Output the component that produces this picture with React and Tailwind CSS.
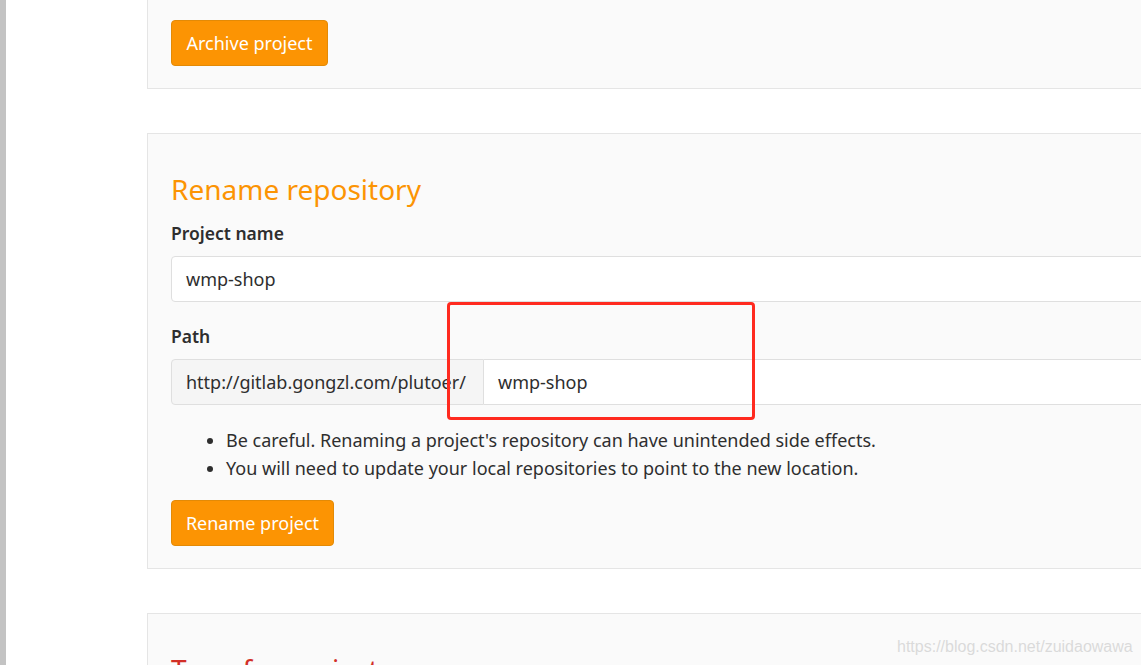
import React from 'react';

const font = { fontFamily: '"Noto Sans", "Open Sans", sans-serif' };

const OrangeButton = ({ children, width }) => (
    <button className={`h-[46px] ${width} rounded-[4px] border border-[#e38a06] bg-[#fc9403] text-[18px] text-white`}>
        {children}
    </button>
);

const App = () => {
    return (
        <div className="relative flex h-[665px] w-[1141px] overflow-hidden bg-white text-[#2e2e2e]" style={font}>
            {/* left scrollbar edge */}
            <div className="w-[6px] shrink-0 bg-[#c3c3c3]" />

            <div className="ml-[141px] flex w-[1100px] shrink-0 flex-col">
                {/* Archive panel (top cut off) */}
                <section className="border border-t-0 border-[#e5e5e5] bg-[#fafafa] pl-[23px] pt-[20px] pb-[22px]">
                    <OrangeButton width="w-[157px]">Archive project</OrangeButton>
                </section>

                {/* Rename repository */}
                <section className="mt-[44px] border border-[#e5e5e5] bg-[#fafafa] pl-[23px] pt-[38px] pb-[22px]">
                    <h2 className="text-[28px] leading-[34px] text-[#fc9403]">Rename repository</h2>

                    <label className="mt-[15px] block text-[17.5px] font-semibold leading-[24px]">Project name</label>
                    <div className="mt-[11px] flex h-[46px] items-center rounded-l-[4px] border border-[#dfdfdf] bg-white pl-[14px] text-[18px]">
                        wmp-shop
                    </div>

                    <label className="mt-[22px] block text-[17.5px] font-semibold leading-[24px]">Path</label>
                    <div className="mt-[11px] flex h-[46px] text-[18px]">
                        <div className="flex w-[313px] items-center whitespace-nowrap rounded-l-[4px] border border-[#dfdfdf] bg-[#f5f5f5] pl-[14px]">
                            http://gitlab.gongzl.com/plutoer/
                        </div>
                        <div className="flex flex-1 items-center border border-l-0 border-[#dfdfdf] bg-white pl-[14px]">
                            wmp-shop
                        </div>
                    </div>

                    <ul className="mt-[21px] list-disc pl-[55px] text-[18px] leading-[28px]">
                        <li>Be careful. Renaming a project's repository can have unintended side effects.</li>
                        <li>You will need to update your local repositories to point to the new location.</li>
                    </ul>

                    <div className="mt-[18px]">
                        <OrangeButton width="w-[163px]">Rename project</OrangeButton>
                    </div>
                </section>

                {/* Transfer project (bottom cut off) */}
                <section className="mt-[44px] h-[200px] border border-[#e5e5e5] bg-[#fafafa] pl-[23px] pt-[38px]">
                    <h2 className="text-[28px] leading-[34px] text-[#d22f27]">Transfer project</h2>
                </section>
            </div>

            {/* screenshot annotation */}
            <div className="absolute left-[447px] top-[302px] h-[118px] w-[308px] rounded-[4px] border-[3px] border-[#ff2a1f]" />

            {/* watermark */}
            <div
                className="absolute left-[897px] top-[637px] text-[16px] leading-[20px] text-[#dadada]"
                style={{ fontFamily: '"Liberation Sans", Arial, sans-serif' }}
            >
                https://blog.csdn.net/zuidaowawa
            </div>
        </div>
    );
};

export default App;
